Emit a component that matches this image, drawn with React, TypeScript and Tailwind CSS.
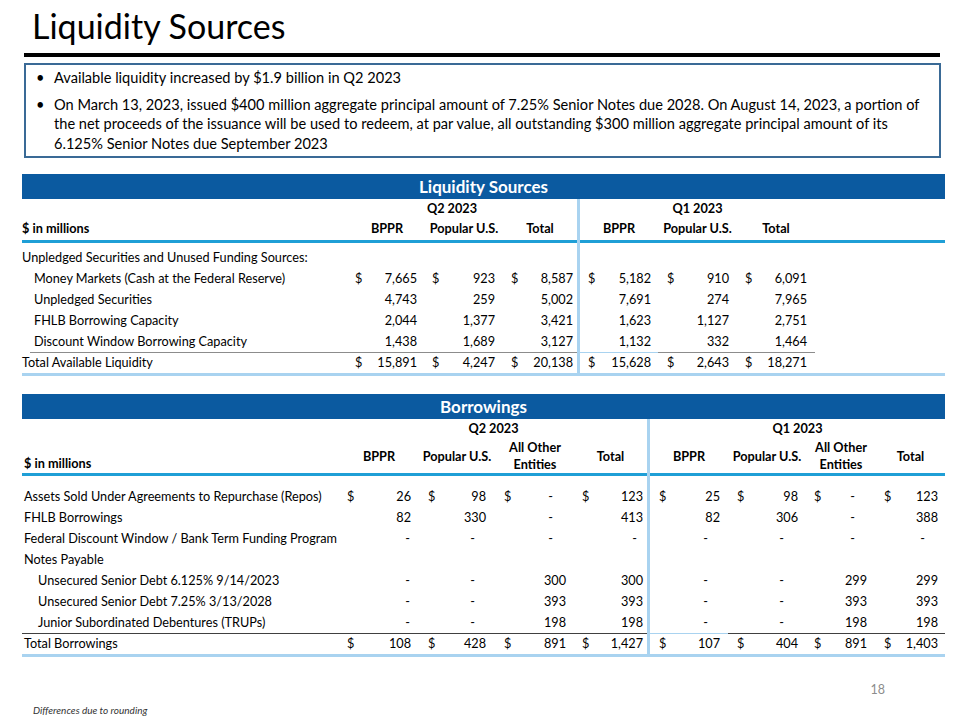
import React from "react";

type Row = {
  label: string;
  vals?: string[];
  dollar?: boolean;
  indent?: boolean;
  total?: boolean;
};

const LIQ_ROWS: Row[] = [
  { label: "Unpledged Securities and Unused Funding Sources:" },
  { label: "Money Markets (Cash at the Federal Reserve)", indent: true, dollar: true, vals: ["7,665", "923", "8,587", "5,182", "910", "6,091"] },
  { label: "Unpledged Securities", indent: true, vals: ["4,743", "259", "5,002", "7,691", "274", "7,965"] },
  { label: "FHLB Borrowing Capacity", indent: true, vals: ["2,044", "1,377", "3,421", "1,623", "1,127", "2,751"] },
  { label: "Discount Window Borrowing Capacity", indent: true, vals: ["1,438", "1,689", "3,127", "1,132", "332", "1,464"] },
  { label: "Total Available Liquidity", dollar: true, total: true, vals: ["15,891", "4,247", "20,138", "15,628", "2,643", "18,271"] },
];

const BOR_ROWS: Row[] = [
  { label: "Assets Sold Under Agreements to Repurchase (Repos)", dollar: true, vals: ["26", "98", "-", "123", "25", "98", "-", "123"] },
  { label: "FHLB Borrowings", vals: ["82", "330", "-", "413", "82", "306", "-", "388"] },
  { label: "Federal Discount Window / Bank Term Funding Program", vals: ["-", "-", "-", "-", "-", "-", "-", "-"] },
  { label: "Notes Payable" },
  { label: "Unsecured Senior Debt 6.125% 9/14/2023", indent: true, vals: ["-", "-", "300", "300", "-", "-", "299", "299"] },
  { label: "Unsecured Senior Debt 7.25% 3/13/2028", indent: true, vals: ["-", "-", "393", "393", "-", "-", "393", "393"] },
  { label: "Junior Subordinated Debentures (TRUPs)", indent: true, vals: ["-", "-", "198", "198", "-", "-", "198", "198"] },
  { label: "Total Borrowings", dollar: true, total: true, vals: ["108", "428", "891", "1,427", "107", "404", "891", "1,403"] },
];

// column padding, so "$" and the figures land where the slide has them
const LIQ_PAD = ["pl-[6px] pr-[8px]", "pl-[7px] pr-[8px]", "pl-[8px] pr-[4px]", "pl-[8px] pr-[7px]", "pl-[9px] pr-[8px]", "pl-[8px] pr-[8px]"];
const BOR_PAD = ["pl-[7px] pr-[7px]", "pl-[10px] pr-[10px]", "pl-[8px] pr-[8px]", "pl-[8px] pr-[4px]", "pl-[9px] pr-[8px]", "pl-[9px] pr-[8px]", "pl-[8px] pr-[9px]", "pl-[8px] pr-[7px]"];
const BOR_DASH = ["mr-[1px]", "mr-[11px]", "mr-[13px]", "mr-[6px]", "mr-[12px]", "mr-[14px]", "mr-[12px]", "mr-[13px]"];

const VLINE = "border-l-[3px] border-[#a9d3f0]";

const Value = ({ v, dollar, pad, dash, split, top }: { v?: string; dollar?: boolean; pad: string; dash: string; split: boolean; top: string }) => (
  <div className={`${split ? VLINE : ""} ${top}`}>
    <div className={`flex h-full items-center justify-between ${pad}`}>
      <span>{dollar ? "$" : ""}</span>
      {v === "-" ? <span className={dash}>-</span> : <span>{v}</span>}
    </div>
  </div>
);

const Bar = ({ title }: { title: string }) => (
  <div className="h-[25px] bg-[#0b5aa0] text-white font-bold text-[17px] flex items-center justify-center">{title}</div>
);

const LiquidityTable = () => {
  const grid = "grid grid-cols-[327px_76px_78px_74px_81px_79px_78px_1fr]";
  return (
    <div className="ml-[22px] w-[923px] text-[12.7px]">
      <Bar title="Liquidity Sources" />
      <div className={`${grid} h-[19px] font-bold`}>
        <div />
        <div className="col-span-3 flex items-center justify-center pr-[22px]">Q2 2023</div>
        <div className={`col-span-3 flex items-center justify-center ${VLINE}`}>Q1 2023</div>
        <div />
      </div>
      <div className={`${grid} h-[22px] font-bold`}>
        <div className="flex items-center">$ in millions</div>
        {["BPPR", "Popular U.S.", "Total", "BPPR", "Popular U.S.", "Total"].map((h, i) => (
          <div key={i} className={`flex items-center justify-center ${i === 3 ? VLINE : ""}`}>{h}</div>
        ))}
        <div />
      </div>
      <div className={`${grid} h-[3px] bg-[#1f9fd6]`}>
        <div className="col-span-4" />
        <div className={VLINE} />
      </div>
      <div className={`${grid} h-[4px]`}>
        <div className="col-span-4" />
        <div className={VLINE} />
      </div>
      {LIQ_ROWS.map((r) => {
        const top = r.total ? "border-t border-[#8c8c8c]" : "";
        return (
          <div key={r.label} className={`${grid} h-[21px]`}>
            <div className={`flex items-center whitespace-nowrap ${r.indent ? "pl-[12px]" : ""} ${r.total ? "ml-[8px] border-t border-[#8c8c8c]" : ""}`}>
              {r.total ? <span className="-ml-[8px]">{r.label}</span> : r.label}
            </div>
            {LIQ_PAD.map((p, i) => (
              <Value key={i} v={r.vals?.[i]} dollar={r.dollar} pad={p} dash="mr-[12px]" split={i === 3} top={r.vals ? top : ""} />
            ))}
            <div />
          </div>
        );
      })}
      <div className="h-[3px] bg-[#a9d3f0]" />
    </div>
  );
};

const BorrowingsTable = () => {
  const grid = "grid grid-cols-[318px_78px_78px_78px_73px_81px_78px_70px_69px]";
  const heads = ["BPPR", "Popular U.S.", "All Other|Entities", "Total", "BPPR", "Popular U.S.", "All Other|Entities", "Total"];
  return (
    <div className="ml-[22px] w-[923px] text-[12.7px]">
      <Bar title="Borrowings" />
      <div className={`${grid} h-[20px] font-bold`}>
        <div />
        <div className="col-span-4 flex items-center justify-center">Q2 2023</div>
        <div className={`col-span-4 flex items-center justify-center ${VLINE}`}>Q1 2023</div>
      </div>
      <div className={`${grid} h-[34px] font-bold`}>
        <div className="flex items-end pl-[2px]">$ in millions</div>
        {heads.map((h, i) => (
          <div key={i} className={`flex flex-col items-center justify-center leading-[17px] ${i === 4 ? VLINE : ""}`}>
            {h.split("|").map((t) => (
              <span key={t}>{t}</span>
            ))}
          </div>
        ))}
      </div>
      <div className={`${grid} h-[3px] bg-[#1f9fd6]`}>
        <div className="col-span-5" />
        <div className={VLINE} />
      </div>
      <div className={`${grid} h-[10px]`}>
        <div className="col-span-5" />
        <div className={VLINE} />
      </div>
      {BOR_ROWS.map((r) => {
        const top = r.total ? "border-t border-[#404040]" : "";
        return (
          <div key={r.label} className={`${grid} h-[21px]`}>
            <div className={`flex items-center whitespace-nowrap ${r.indent ? "pl-[16px]" : "pl-[2px]"} ${top}`}>{r.label}</div>
            {BOR_PAD.map((p, i) => (
              <Value key={i} v={r.vals?.[i]} dollar={r.dollar} pad={p} dash={BOR_DASH[i]} split={i === 4} top={top} />
            ))}
          </div>
        );
      })}
      <div className="h-[3px] bg-[#a9d3f0]" />
    </div>
  );
};

export default function App() {
  return (
    <div className="w-[960px] h-[720px] bg-white text-black font-['Lato',sans-serif] flex flex-col overflow-hidden">
      <h1 className="mt-[6px] ml-[32px] text-[34px] leading-[40px] font-normal">Liquidity Sources</h1>

      <div className="mt-[7px] ml-[24px] w-[916px] h-[4px] bg-black" />

      {/* Bullet box */}
      <div className="mt-[6px] ml-[24px] w-[917px] h-[95px] border-2 border-[#3a6a96] pt-[3px] pl-[10px] text-[14.6px] leading-[19.5px]">
        <div className="flex">
          <span className="w-[18px] shrink-0">•</span>
          <span>Available liquidity increased by $1.9 billion in Q2 2023</span>
        </div>
        <div className="flex mt-[7px]">
          <span className="w-[18px] shrink-0">•</span>
          <span className="whitespace-nowrap">
            On March 13, 2023, issued $400 million aggregate principal amount of 7.25% Senior Notes due 2028. On August 14, 2023, a portion of
            <br />
            the net proceeds of the issuance will be used to redeem, at par value, all outstanding $300 million aggregate principal amount of its
            <br />
            6.125% Senior Notes due September 2023
          </span>
        </div>
      </div>

      <div className="mt-[16px]">
        <LiquidityTable />
      </div>

      <div className="mt-[18px]">
        <BorrowingsTable />
      </div>

      <div className="mt-[25px] flex justify-end pr-[75px] text-[12.5px] leading-[16px] text-[#8c8c8c]">18</div>
      <div className="mt-[6px] ml-[33px] text-[10px] leading-[13px] italic text-[#333]">Differences due to rounding</div>
    </div>
  );
}
